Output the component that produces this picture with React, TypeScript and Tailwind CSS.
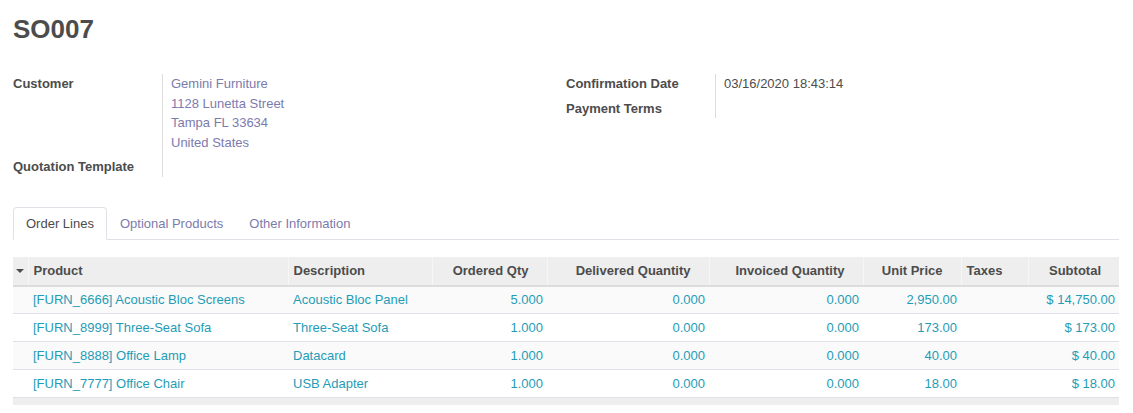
import React from "react";

const lines = [
  { product: "[FURN_6666] Acoustic Bloc Screens", desc: "Acoustic Bloc Panel", qty: "5.000", price: "2,950.00", subtotal: "$ 14,750.00" },
  { product: "[FURN_8999] Three-Seat Sofa", desc: "Three-Seat Sofa", qty: "1.000", price: "173.00", subtotal: "$ 173.00" },
  { product: "[FURN_8888] Office Lamp", desc: "Datacard", qty: "1.000", price: "40.00", subtotal: "$ 40.00" },
  { product: "[FURN_7777] Office Chair", desc: "USB Adapter", qty: "1.000", price: "18.00", subtotal: "$ 18.00" },
];

const headers = [
  { label: "Product", w: "w-[260px]", align: "text-left pl-[5px]" },
  { label: "Description", w: "w-[144px]", align: "text-left pl-[5px]" },
  { label: "Ordered Qty", w: "w-[115px]", align: "text-right pr-[18px]" },
  { label: "Delivered Quantity", w: "w-[162px]", align: "text-right pr-[18px]" },
  { label: "Invoiced Quantity", w: "w-[154px]", align: "text-right pr-[18px]" },
  { label: "Unit Price", w: "w-[98px]", align: "text-right pr-[18px]" },
  { label: "Taxes", w: "w-[67px]", align: "text-left pl-[5px]" },
  { label: "Subtotal", w: "w-[91px]", align: "text-right pr-[18px]" },
];

function Field({ label, children, last }: { label: string; children?: React.ReactNode; last?: boolean }) {
  return (
    <>
      <div className={`font-bold ${last ? "" : "pb-[5px]"}`}>{label}</div>
      <div className={`border-l border-[#dddddd] pl-[8px] ${last ? "" : "pb-[5px]"}`}>{children}</div>
    </>
  );
}

export default function App() {
  return (
    <div className="min-h-screen bg-white text-[#4c4c4c] text-[13px] leading-[19.5px] font-['Liberation_Sans',Arial,sans-serif] pl-[13px] pr-[14px]">
      <h1 className="pt-[14px] text-[26px] leading-[31px] font-bold">SO007</h1>

      <div className="flex mt-[29px]">
        <div className="w-[553px] grid grid-cols-[149px_1fr] content-start">
          <Field label="Customer">
            <div className="text-[#7c7bad]">
              <div>Gemini Furniture</div>
              <div>1128 Lunetta Street</div>
              <div>Tampa FL 33634</div>
              <div>United States</div>
            </div>
          </Field>
          <Field label="Quotation Template" last />
        </div>
        <div className="flex-1 grid grid-cols-[149px_1fr] content-start">
          <Field label="Confirmation Date">03/16/2020 18:43:14</Field>
          <Field label="Payment Terms" last />
        </div>
      </div>

      <div className="mt-[30px] flex border-b border-[#dee2e6]">
        <div className="-mb-px border border-[#dee2e6] border-b-white bg-white rounded-t-[4px] px-[12px] py-[6px] leading-[19px]">
          Order Lines
        </div>
        <div className="-mb-px border border-transparent px-[12px] py-[6px] leading-[19px] text-[#7c7bad]">
          Optional Products
        </div>
        <div className="-mb-px border border-transparent px-[12px] py-[6px] leading-[19px] text-[#7c7bad]">
          Other Information
        </div>
      </div>

      <table className="mt-[17px] w-[1106px] table-fixed border-collapse">
        <thead>
          <tr className="bg-[#eeeeee] border-b-2 border-[#dcdcdc]">
            <th className="w-[15px] h-[29px] p-0">
              <div className="flex justify-center">
                <div className="w-0 h-0 border-l-[4px] border-r-[4px] border-t-[4px] border-l-transparent border-r-transparent border-t-[#4c4c4c]" />
              </div>
            </th>
            {headers.map((h) => (
              <th key={h.label} className={`${h.w} ${h.align} h-[29px] py-0 border-l border-[#f6f6f6] font-bold whitespace-nowrap`}>
                {h.label}
              </th>
            ))}
          </tr>
        </thead>
        <tbody className="text-[#1f9cb7]">
          {lines.map((l, i) => (
            <tr key={l.product} className={`h-[28px] border-b border-[#dee2e6] ${i % 2 === 0 ? "bg-[#fafafa]" : "bg-white"}`}>
              <td className="p-0" />
              <td className="pl-[5px] whitespace-nowrap">{l.product}</td>
              <td className="pl-[5px] whitespace-nowrap">{l.desc}</td>
              <td className="pr-[4px] text-right">{l.qty}</td>
              <td className="pr-[4px] text-right">0.000</td>
              <td className="pr-[4px] text-right">0.000</td>
              <td className="pr-[4px] text-right">{l.price}</td>
              <td />
              <td className="pr-[4px] text-right whitespace-nowrap">{l.subtotal}</td>
            </tr>
          ))}
        </tbody>
        <tfoot>
          <tr className="bg-[#eeeeee] h-[7px]">
            <td colSpan={9} className="p-0" />
          </tr>
        </tfoot>
      </table>
    </div>
  );
}
